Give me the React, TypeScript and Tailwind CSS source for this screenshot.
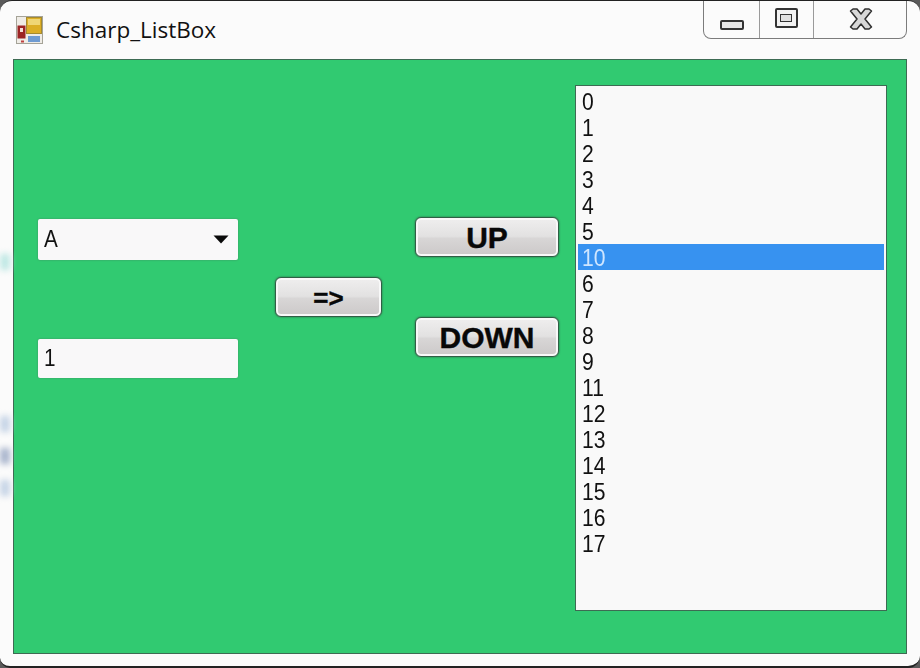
import React from "react";

const items = ["0","1","2","3","4","5","10","6","7","8","9","11","12","13","14","15","16","17"];

function Btn({ label, w, size, mt }: { label: string; w: string; size: string; mt?: string }) {
  return (
    <div className={`${w} ${mt ?? ""} h-10 rounded-[6px] border border-[#2f5f45] bg-[#f8f8f8] p-[2px] shadow-[0_0_2px_#2c5a40]`}>
      <div className="h-full w-full rounded-[3px] bg-[linear-gradient(#eeeded_0%,#e2e1e1_48%,#d8d6d6_54%,#cdcaca_100%)] flex items-center justify-center pt-[2px]">
        <span className={`${size} font-bold text-[#080808] leading-none`} style={{ fontFamily: '"Liberation Sans", sans-serif', WebkitTextStroke: "0.4px #080808" }}>{label}</span>
      </div>
    </div>
  );
}

function AppIcon() {
  return (
    <svg width="28" height="28" viewBox="0 0 28 28" className="shrink-0">
      <rect x="0.5" y="0.5" width="26" height="27" fill="#efece6" stroke="#a5a398" />
      <rect x="10.5" y="1.5" width="15" height="16" fill="#dcae26" stroke="#a58a2e" />
      <rect x="12" y="3" width="12" height="6" fill="#efd676" />
      <rect x="1.5" y="9.5" width="8" height="13" fill="#9c2424" />
      <rect x="4" y="12" width="3" height="4" fill="#f3dfd8" />
      <rect x="12" y="20" width="12" height="6" fill="#6f9bd2" />
      <rect x="5" y="24.5" width="3" height="2" fill="#c04040" />
    </svg>
  );
}

export default function App() {
  return (
    <div className="relative w-[920px] h-[668px] overflow-hidden bg-[#5a5a5a]" style={{ fontFamily: '"Liberation Sans", sans-serif' }}>
      <div className="h-full w-full flex flex-col bg-[#fbfbfb] rounded-tl-[12px] rounded-tr-[12px] rounded-br-[12px] rounded-bl-[10px] border-t border-b-2 border-[#222] border-x-0">
        {/* title bar */}
        <div className="h-[58px] shrink-0 flex items-start pl-[16px] pr-[13px]">
          <div className="mt-[15px]"><AppIcon /></div>
          <span className="ml-[12px] mt-[14px] text-[22.5px] leading-[30px] text-[#111]" style={{ fontFamily: '"Open Sans", sans-serif' }}>Csharp_ListBox</span>
          <div className="ml-auto flex h-[38px] w-[204px] rounded-b-[8px] border border-t-0 border-[#7c7c7c] bg-[#fbfbfb]">
            <div className="w-[56px] border-r border-[#9a9a9a] flex items-center justify-center pt-[10px] pl-[1px]">
              <div className="w-[24px] h-[10px] border-2 border-[#333] rounded-[2px] bg-[#e6e6e6]" />
            </div>
            <div className="w-[54px] border-r border-[#9a9a9a] flex items-center justify-center pb-[4px] pr-[1px]">
              <div className="w-[23px] h-[20px] border-2 border-[#333] rounded-[2px] bg-[#f2f2f2] flex items-center justify-center">
                <div className="w-[12px] h-[8px] border border-[#333] bg-[#e0e0e0]" />
              </div>
            </div>
            <div className="flex-1 flex items-center justify-center pb-[2px] pl-[2px]">
              <svg width="24" height="22" viewBox="0 0 24 22">
                <path d="M1.5 3 L4 1h4l4 5 4-5h4l2.5 2-6.5 8 6.5 8-2.5 2h-4l-4-5-4 5h-4l-2.5-2 6.5-8z" fill="#d8d8d8" stroke="#2f2f2f" strokeWidth="1.5" strokeLinejoin="round" />
              </svg>
            </div>
          </div>
        </div>
        {/* client area */}
        <div className="ml-[13px] mr-[13px] h-[595px] shrink-0 border border-[#3d6b53] bg-[#31ca71] flex items-start">
          <div className="ml-[24px] mt-[159px] w-[200px] flex flex-col">
            <div className="h-[41px] rounded-[2px] bg-[#f9f8f9] shadow-[0_0_2px_#3f8a5f] flex items-center justify-between pl-[6px] pr-[9px]">
              <span className="text-[23px] leading-none text-[#111] inline-block origin-left scale-x-90">A</span>
              <svg width="16" height="9" viewBox="0 0 16 9"><path d="M0.5 0.5h15L8 8.5z" fill="#0a0a0a" /></svg>
            </div>
            <div className="mt-[79px] h-[39px] rounded-[2px] bg-[#f9f8f9] shadow-[0_0_2px_#3f8a5f] flex items-center pl-[6px]">
              <span className="text-[23px] leading-none text-[#111] inline-block origin-left scale-x-90">1</span>
            </div>
          </div>
          <div className="ml-[37px] mt-[217px]">
            <Btn label="=>" w="w-[107px]" size="text-[26px]" />
          </div>
          <div className="ml-[33px] mt-[157px] flex flex-col">
            <Btn label="UP" w="w-[144px]" size="text-[30px]" />
            <Btn label="DOWN" w="w-[144px]" size="text-[30px]" mt="mt-[60px]" />
          </div>
          <div className="ml-[16px] mt-[25px] w-[312px] h-[526px] border border-[#3d6b53] bg-[#f9f9f9] pt-[2px] px-[2px]">
            {items.map((n) => (
              <div key={n} className={`h-[26px] pl-[4px] text-[24px] leading-[27px] ${n === "10" ? "bg-[#3792f0] text-[#cfe6ff]" : "text-[#111]"}`}>
                <span className="inline-block origin-left scale-x-[0.88]">{n}</span>
              </div>
            ))}
          </div>
        </div>
      </div>
      {/* bleed from the desktop at the window edge */}
      <div className="absolute left-0 top-[254px] w-[10px] h-[16px] bg-[#bfe8e4] blur-[3px]" />
      <div className="absolute left-0 top-[416px] w-[10px] h-[16px] bg-[#c6d4e6] blur-[3px]" />
      <div className="absolute left-0 top-[448px] w-[10px] h-[16px] bg-[#a8b4cc] blur-[3px]" />
      <div className="absolute left-0 top-[480px] w-[10px] h-[16px] bg-[#c6d4e6] blur-[3px]" />
    </div>
  );
}
